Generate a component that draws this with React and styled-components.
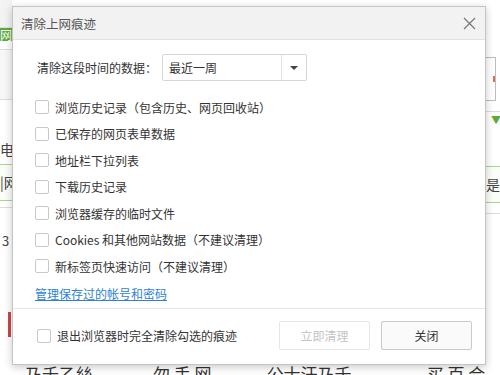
import React from "react";
import styled, { createGlobalStyle } from "styled-components";

const GlobalStyle = createGlobalStyle`
  html, body {
    margin: 0;
    padding: 0;
    background: #fff;
  }
  body {
    font-family: "Noto Sans CJK SC", "Noto Sans", "Liberation Sans", sans-serif;
  }
`;

const Page = styled.div`
  position: relative;
  width: 500px;
  height: 375px;
  overflow: hidden;
  display: grid;
  grid-template-columns: 12px 1fr 14px;
  grid-template-rows: 1fr 16px;
  background: #fff;
`;

const Strip = styled.div`
  display: flex;
  flex-direction: column;
  overflow: hidden;
  font-size: 15px;
  color: #444;
  white-space: nowrap;
`;

const Band = styled.div`
  height: ${p => p.h}px;
  flex: none;
  background: ${p => p.bg || "transparent"};
  border-bottom: ${p => (p.line ? `1px solid ${p.line}` : "none")};
  color: ${p => p.color || "#444"};
  font-size: ${p => p.size || 15}px;
  line-height: ${p => p.h}px;
  text-indent: ${p => p.indent || 0}px;
  position: relative;
`;

const RedMark = styled.div`
  width: 3px;
  height: 25px;
  margin-left: 8px;
  background: #c9474a;
`;

const SideBox = styled.div`
  height: 42px;
  width: 9px;
  flex: none;
  border: 1px solid #bdbdbd;
  border-left: none;
  display: flex;
  align-items: center;
  justify-content: flex-end;
  &::after {
    content: "";
    width: 2px;
    height: 6px;
    background: #e46a5a;
  }
`;

const BottomRow = styled.div`
  grid-column: 1 / 4;
  display: flex;
  font-size: 17px;
  color: #333;
  line-height: 30px;
  height: 16px;
  white-space: nowrap;
  overflow: hidden;
  span {
    position: relative;
  }
`;

/* dialog */

const Dialog = styled.div`
  position: absolute;
  left: 12px;
  top: 6px;
  width: 474px;
  height: 359px;
  box-sizing: border-box;
  background: #fff;
  border: 1px solid #c4c4c4;
  box-shadow: 0 2px 8px rgba(0, 0, 0, 0.22);
  display: flex;
  flex-direction: column;
  color: #333;
  font-size: 12px;
`;

const TitleBar = styled.div`
  height: 32px;
  flex: none;
  background: #f2f2f2;
  border-bottom: 1px solid #e2e2e2;
  display: flex;
  align-items: center;
  justify-content: space-between;
  padding: 0 7px 0 8px;
`;

const Title = styled.span`
  font-size: 12.5px;
  color: #555;
`;

const CloseButton = styled.button`
  width: 18px;
  height: 18px;
  border: none;
  background: none;
  padding: 0;
  display: flex;
  align-items: center;
  justify-content: center;
`;

const Body = styled.div`
  flex: 1;
  padding: 14px 0 0 22px;
`;

const TimeRow = styled.div`
  display: flex;
  align-items: center;
  gap: 5px;
  padding-left: 2px;
  margin-bottom: 13px;
`;

const Select = styled.div`
  width: 145px;
  height: 27px;
  box-sizing: border-box;
  border: 1px solid #d6d6d6;
  border-radius: 2px;
  display: flex;
  align-items: stretch;
`;

const SelectValue = styled.div`
  flex: 1;
  padding-left: 6px;
  display: flex;
  align-items: center;
  color: #333;
`;

const SelectArrow = styled.div`
  width: 24px;
  border-left: 1px solid #e2e2e2;
  display: flex;
  align-items: center;
  justify-content: center;
  &::after {
    content: "";
    border-left: 4px solid transparent;
    border-right: 4px solid transparent;
    border-top: 4px solid #444;
  }
`;

const CheckRow = styled.label`
  display: flex;
  align-items: center;
  gap: 6px;
  height: 26.5px;
  color: #333;
`;

const Box = styled.span`
  width: 14px;
  height: 14px;
  box-sizing: border-box;
  border: 1px solid #c8c8c8;
  border-radius: 2px;
  background: #fff;
  flex: none;
`;

const Link = styled.a`
  display: block;
  margin-top: 1px;
  color: #2f7fd6;
  text-decoration: underline;
  line-height: 26px;
  cursor: pointer;
`;

const Footer = styled.div`
  height: 53px;
  flex: none;
  border-top: 1px solid #e6e6e6;
  display: flex;
  align-items: center;
  padding: 0 13px 2px 24px;
  gap: 11px;
`;

const Spacer = styled.div`
  flex: 1;
`;

const Button = styled.button`
  width: 91px;
  height: 29px;
  box-sizing: border-box;
  border: 1px solid ${p => (p.disabled ? "#e6e6e6" : "#cacaca")};
  border-radius: 2px;
  background: ${p => (p.disabled ? "#fff" : "#fafafa")};
  color: ${p => (p.disabled ? "#c4c4c4" : "#333")};
  font-family: inherit;
  font-size: 12px;
  padding: 0;
`;

const options = [
  "浏览历史记录（包含历史、网页回收站）",
  "已保存的网页表单数据",
  "地址栏下拉列表",
  "下载历史记录",
  "浏览器缓存的临时文件",
  "Cookies 和其他网站数据（不建议清理）",
  "新标签页快速访问（不建议清理）",
];

const CloseIcon = () => (
  <svg width="13" height="13" viewBox="0 0 13 13">
    <path d="M1 1 L12 12 M12 1 L1 12" stroke="#777" strokeWidth="1.2" fill="none" />
  </svg>
);

export default function App() {
  return (
    <>
      <GlobalStyle />
      <Page>
        <Strip>
          <Band h={27} bg="#f3f3f3" line="#e0e0e0" />
          <Band h={13} bg="#5dab3a" color="#fff" size={12}>网</Band>
          <Band h={8} line="#dcdcdc" />
          <Band h={49} bg="#f7f7f7" line="#dcdcdc" />
          <Band h={40} />
          <Band h={18} size={14}>电 衤</Band>
          <Band h={6} line="#a9d68f" />
          <Band h={35} bg="#fbfdf9" line="#a9d68f" size={14}>|网</Band>
          <Band h={6} line="#dcdcdc" />
          <Band h={24} />
          <Band h={18} size={13} indent={2}>3</Band>
          <Band h={62} />
          <RedMark />
        </Strip>
        <div />
        <Strip>
          <Band h={57} />
          <SideBox />
          <Band h={10} line="#dcdcdc" />
          <Band h={16} color="#5dab3a" size={10} indent={5}>▼</Band>
          <Band h={38} line="#a9d68f" />
          <Band h={35} bg="#fbfdf9" line="#a9d68f" size={14}>是</Band>
          <Band h={10} line="#dcdcdc" />
        </Strip>
        <BottomRow>
          <span style={{ left: 25 }}>乃千乙絲</span>
          <span style={{ left: 85 }}>勿 手 网</span>
          <span style={{ left: 140 }}>公士汗乃千</span>
          <span style={{ left: 215 }}>买 百 合</span>
        </BottomRow>

        <Dialog>
          <TitleBar>
            <Title>清除上网痕迹</Title>
            <CloseButton>
              <CloseIcon />
            </CloseButton>
          </TitleBar>
          <Body>
            <TimeRow>
              <span>清除这段时间的数据：</span>
              <Select>
                <SelectValue>最近一周</SelectValue>
                <SelectArrow />
              </Select>
            </TimeRow>
            {options.map(text => (
              <CheckRow key={text}>
                <Box />
                <span>{text}</span>
              </CheckRow>
            ))}
            <Link>管理保存过的帐号和密码</Link>
          </Body>
          <Footer>
            <CheckRow>
              <Box />
              <span>退出浏览器时完全清除勾选的痕迹</span>
            </CheckRow>
            <Spacer />
            <Button disabled>立即清理</Button>
            <Button>关闭</Button>
          </Footer>
        </Dialog>
      </Page>
    </>
  );
}
